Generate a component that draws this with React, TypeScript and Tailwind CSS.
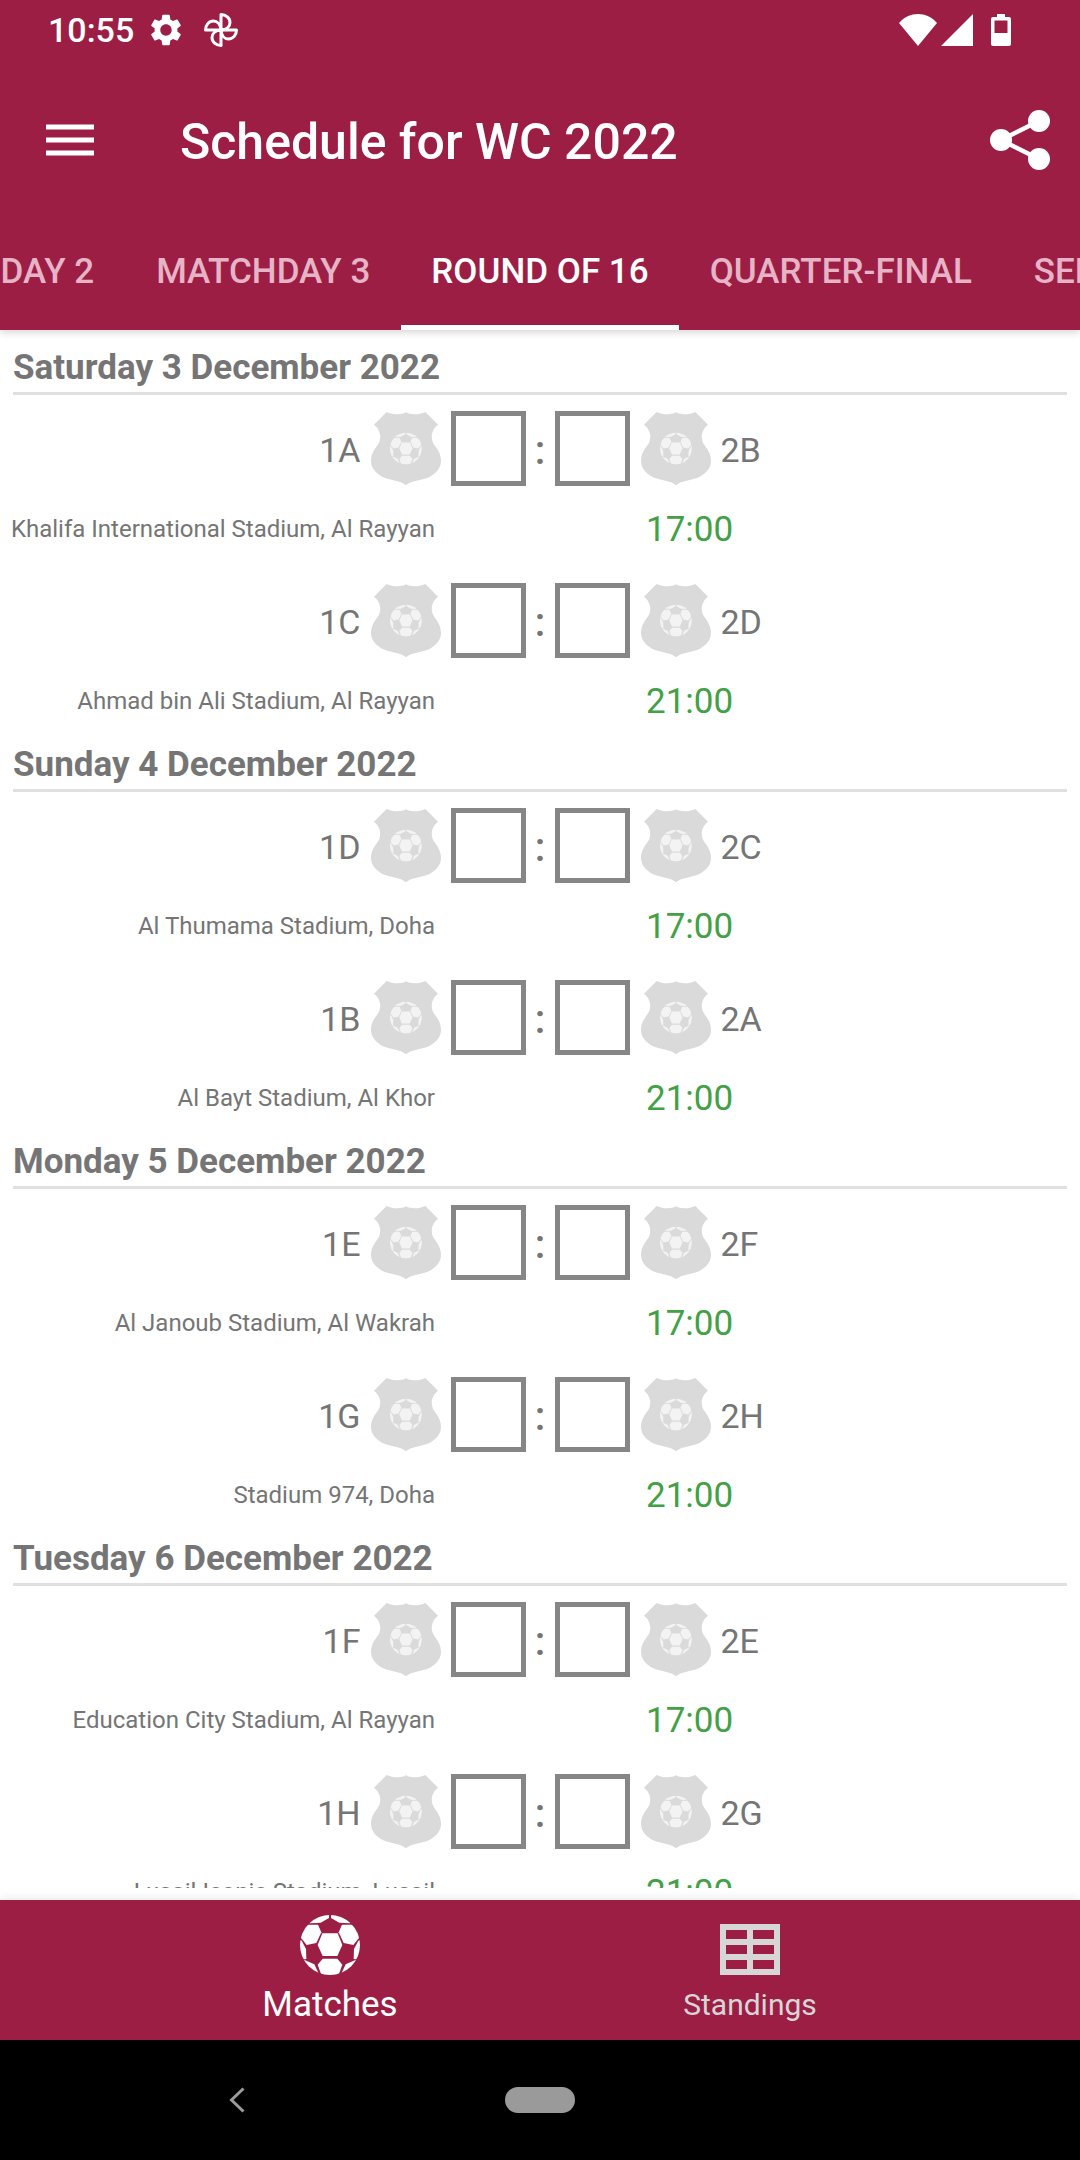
import { useId, useState } from 'react'
import { MdSettings } from 'react-icons/md'

const tabsBefore = ['MATCHDAY 2', 'MATCHDAY 3']
const tabsAfter = ['QUARTER-FINAL', 'SEMI-FINAL']

const days = [
  {
    date: 'Saturday 3 December 2022',
    matches: [
      { home: '1A', away: '2B', venue: 'Khalifa International Stadium, Al Rayyan', time: '17:00' },
      { home: '1C', away: '2D', venue: 'Ahmad bin Ali Stadium, Al Rayyan', time: '21:00' },
    ],
  },
  {
    date: 'Sunday 4 December 2022',
    matches: [
      { home: '1D', away: '2C', venue: 'Al Thumama Stadium, Doha', time: '17:00' },
      { home: '1B', away: '2A', venue: 'Al Bayt Stadium, Al Khor', time: '21:00' },
    ],
  },
  {
    date: 'Monday 5 December 2022',
    matches: [
      { home: '1E', away: '2F', venue: 'Al Janoub Stadium, Al Wakrah', time: '17:00' },
      { home: '1G', away: '2H', venue: 'Stadium 974, Doha', time: '21:00' },
    ],
  },
  {
    date: 'Tuesday 6 December 2022',
    matches: [
      { home: '1F', away: '2E', venue: 'Education City Stadium, Al Rayyan', time: '17:00' },
      { home: '1H', away: '2G', venue: 'Lusail Iconic Stadium, Lusail', time: '21:00' },
    ],
  },
]

type Match = (typeof days)[number]['matches'][number]

// White panels of a football, drawn in a 180 x 180 box
function BallPanels() {
  const id = useId()
  const side = (
    <>
      <path d="M87 -2V9L62 23L30 25L16 10Z" />
      <path d="M24 29H54L64 52L49 84L20 90L4 70L-2 50Z" />
      <path d="M-4 74L5 77L18 102L19 132L4 134Z" />
      <path d="M12 134L43 148L58 180H10Z" />
    </>
  )
  return (
    <>
      <clipPath id={id}>
        <circle cx="90" cy="90" r="90" />
      </clipPath>
      <g clipPath={`url(#${id})`}>
        <path d="M67 55H113L127 90L112 123H68L53 90Z" />
        <path d="M68 131H112L127 149L115 182H65L53 149Z" />
        {side}
        <g transform="matrix(-1 0 0 1 180 0)">{side}</g>
      </g>
    </>
  )
}

function Crest() {
  return (
    <svg viewBox="0 0 210 220" className="w-[70px] shrink-0" aria-hidden="true">
      <path
        fill="#dadada"
        d="M47 0L9 38C25 50 32 70 25 90C18 106 0 118 0 147C0 170 18 188 40 197C65 206 92 206 105 220C118 206 145 206 170 197C192 188 210 170 210 147C210 118 192 106 185 90C178 70 185 50 201 38L163 0C145 8 120 10 105 1C90 10 65 8 47 0Z"
      />
      <g fill="#f3f3f3" transform="translate(57 62) scale(.53)">
        <BallPanels />
      </g>
    </svg>
  )
}

function ScoreBox({ label }: { label: string }) {
  return (
    <input
      type="text"
      inputMode="numeric"
      aria-label={label}
      className="size-[75px] border-[5px] border-[#868686] bg-white text-center text-4xl outline-none"
    />
  )
}

function MatchRow({ match }: { match: Match }) {
  return (
    <li className="pt-4">
      <div className="grid grid-cols-[1fr_auto_1fr] items-center">
        <div className="flex items-center justify-end gap-[10px] pr-[10px]">
          <span className="pt-1 text-[34px] leading-10">{match.home}</span>
          <Crest />
        </div>
        <div className="flex items-center">
          <ScoreBox label={`${match.home} score`} />
          <span className="w-[29px] pt-1 text-center text-[40px] leading-10 font-medium">:</span>
          <ScoreBox label={`${match.away} score`} />
        </div>
        <div className="flex items-center gap-[10px] pl-[11px]">
          <Crest />
          <span className="pt-1 text-[34px] leading-10">{match.away}</span>
        </div>
      </div>
      <div className="mt-[5px] grid h-[76px] grid-cols-2 items-center">
        <span className="pr-[105px] text-right text-[24px] leading-8 whitespace-nowrap">{match.venue}</span>
        <span className="pt-[2px] pl-[106px] text-[35px] leading-10 text-[#43a047]">{match.time}</span>
      </div>
    </li>
  )
}

function StatusBar() {
  return (
    <div className="flex h-[66px] items-start justify-between pt-[10px] pr-[69px] pl-12">
      <div className="flex h-10 items-center">
        <span className="w-[88px] text-[34px] leading-10 font-medium">10:55</span>
        <MdSettings className="ml-[11px] size-[38px]" />
        <svg
          viewBox="0 0 36 36"
          className="ml-[18px] size-9"
          fill="none"
          stroke="currentColor"
          strokeWidth="3"
          strokeLinejoin="round"
        >
          <path d="M18 18V2.500C23 2.500 27 6 27 10.500C27 14 24 17.500 18 18Z" />
          <path d="M18 18H33.500C33.500 23 30 27 25.500 27C22 27 18.500 24 18 18Z" />
          <path d="M18 18V33.500C13 33.500 9 30 9 25.500C9 22 12 18.500 18 18Z" />
          <path d="M18 18H2.500C2.500 13 6 9 10.500 9C14 9 17.500 12 18 18Z" />
        </svg>
      </div>
      <div className="flex h-10 items-center">
        <svg viewBox="0 0 38 32" className="w-[38px]" fill="currentColor">
          <path d="M0 9C10 -3 28 -3 38 9L19 32Z" />
        </svg>
        <svg viewBox="0 0 32 32" className="ml-1 w-8" fill="currentColor">
          <path d="M32 0V32H0Z" />
        </svg>
        <svg viewBox="0 0 20 32" className="ml-[18px] w-5" fill="currentColor" fillRule="evenodd">
          <path d="M6 0H14V3H18Q20 3 20 5V30Q20 32 18 32H2Q0 32 0 30V5Q0 3 2 3H6ZM3.500 6.500V19H16.500V6.500Z" />
        </svg>
      </div>
    </div>
  )
}

export default function App() {
  const [tab, setTab] = useState('ROUND OF 16')

  const renderTab = (name: string) => (
    <button
      key={name}
      type="button"
      role="tab"
      aria-selected={tab === name}
      onClick={() => setTab(name)}
      className={`h-full shrink-0 border-y-[5px] border-t-transparent text-[35px] leading-10 font-medium whitespace-nowrap ${
        tab === name ? 'border-b-white px-[30px] text-white' : 'border-b-transparent px-[31px] text-[#e6b4c6]'
      }`}
    >
      {name}
    </button>
  )

  return (
    <div className="flex h-screen flex-col overflow-hidden bg-white font-['Roboto',sans-serif] text-[#757575]">
      <header className="relative z-10 bg-[#9c1e45] text-white shadow-[0_2px_8px_rgba(0,0,0,0.18)]">
        <StatusBar />

        {/* Toolbar */}
        <div className="flex h-[147px] items-center pr-[30px] pl-[46px]">
          <button type="button" aria-label="Open menu">
            <svg viewBox="0 0 48 32" className="w-12" fill="currentColor">
              <path d="M0 .5H48V5.500H0ZM0 13.500H48V18.500H0ZM0 26.500H48V31.500H0Z" />
            </svg>
          </button>
          <h1 className="ml-[86px] flex-1 pt-1 text-[50px] leading-16 font-medium">Schedule for WC 2022</h1>
          <button type="button" aria-label="Share">
            <svg viewBox="0 0 60 60" className="w-[60px]" fill="currentColor">
              <path d="M49 11L11 30L49 49" fill="none" stroke="currentColor" strokeWidth="4.500" />
              <circle cx="49" cy="11" r="11" />
              <circle cx="11" cy="30" r="11" />
              <circle cx="49" cy="49" r="11" />
            </svg>
          </button>
        </div>

        <div role="tablist" className="grid h-[117px] grid-cols-[minmax(0,1fr)_auto_minmax(0,1fr)]">
          <div className="flex justify-end overflow-hidden">{tabsBefore.map(renderTab)}</div>
          {renderTab('ROUND OF 16')}
          <div className="flex overflow-hidden">{tabsAfter.map(renderTab)}</div>
        </div>
      </header>

      <main className="mb-3 min-h-0 flex-1 overflow-y-auto pt-3 [scrollbar-width:none]">
        {days.map((day) => (
          <section key={day.date}>
            <h2 className="mx-[13px] h-[53px] border-b-[3px] border-[#e0e0e0] pt-[2px] text-[35px] leading-12 font-bold">
              {day.date}
            </h2>
            <ul>
              {day.matches.map((match) => (
                <MatchRow key={match.home} match={match} />
              ))}
            </ul>
          </section>
        ))}
      </main>

      <nav className="flex h-[140px] shrink-0 justify-center bg-[#9c1e45] shadow-[0_-2px_10px_rgba(0,0,0,0.08)]">
        <a href="#matches" aria-current="page" className="flex w-[420px] flex-col items-center pt-[15px] text-white">
          <svg viewBox="0 0 180 180" className="size-[60px]" fill="currentColor">
            <BallPanels />
          </svg>
          <span className="mt-[10px] text-[35px] leading-10">Matches</span>
        </a>
        <a href="#standings" className="flex w-[420px] flex-col items-center pt-[15px] text-[#d6d6d6]">
          <svg viewBox="0 0 60 60" className="size-[60px]" fill="currentColor" fillRule="evenodd">
            <path d="M0 9H60V60H0ZM6 15V24H27V15ZM33 15V24H54V15ZM6 30V39H27V30ZM33 30V39H54V30ZM6 45V54H27V45ZM33 45V54H54V45Z" />
          </svg>
          <span className="mt-[10px] text-[30px] leading-10">Standings</span>
        </a>
      </nav>

      <div className="grid h-[120px] shrink-0 grid-cols-[1fr_auto_1fr] items-center bg-black text-[#9a9a9a]">
        <button type="button" aria-label="Back" className="justify-self-start pl-[229px]">
          <svg viewBox="0 0 16 26" className="w-4" fill="none" stroke="currentColor" strokeWidth="3">
            <path d="M14.500 1.500L2.500 13L14.500 24.500" />
          </svg>
        </button>
        <button type="button" aria-label="Home" className="h-[26px] w-[70px] rounded-full bg-[#9a9a9a]" />
      </div>
    </div>
  )
}
